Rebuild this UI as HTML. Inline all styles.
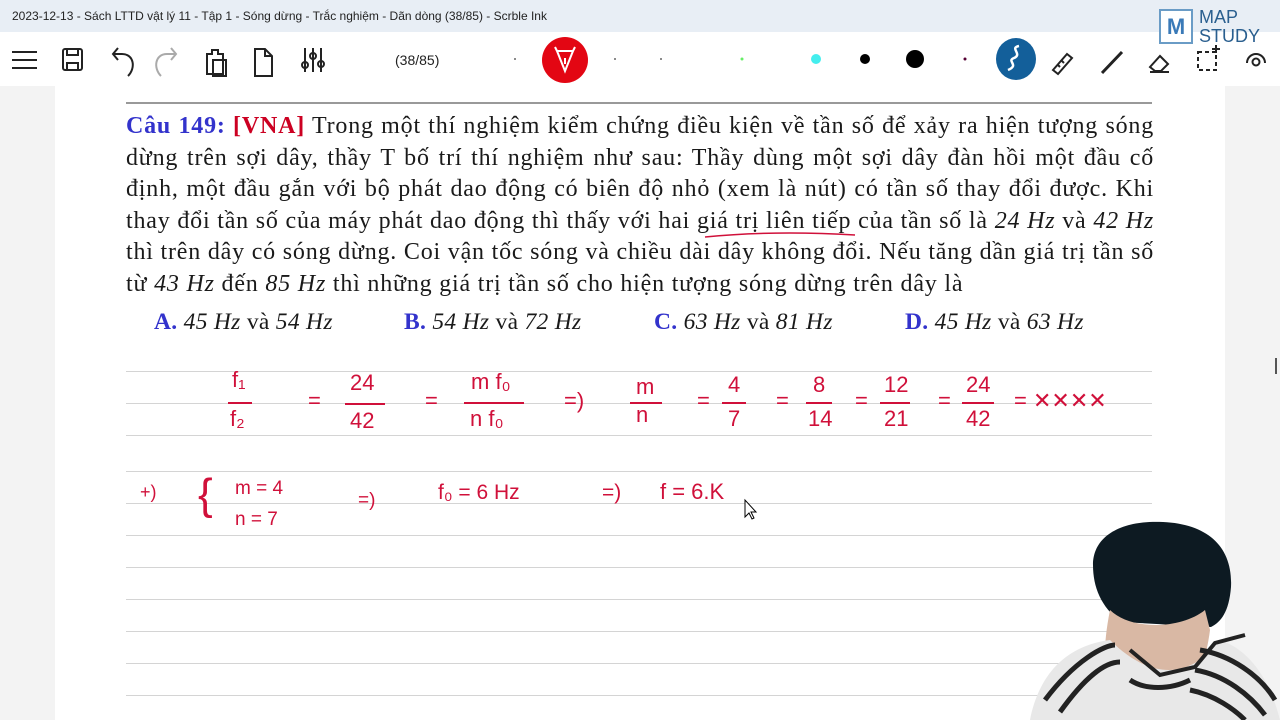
<!DOCTYPE html>
<html><head><meta charset="utf-8"><style>
*{margin:0;padding:0;box-sizing:border-box}
body{width:1280px;height:720px;overflow:hidden;background:#f3f3f3;font-family:"Liberation Sans",sans-serif;position:relative}
#title{position:absolute;left:0;top:0;width:1280px;height:32px;background:#e8eef5;font-size:12px;color:#222;padding:9px 0 0 12px}
#tb{position:absolute;left:0;top:32px;width:1280px;height:54px;background:#fff}
#page{position:absolute;left:55px;top:86px;width:1170px;height:634px;background:#fff}
.ln{position:absolute;left:126px;width:1026px;height:1px;background:#d4d4d4}
.txt{position:absolute;left:126px;width:1028px;font-family:"Liberation Serif",serif;font-size:24px;letter-spacing:0.8px;color:#1a1a1a}
.txt div{height:31.6px;line-height:31.6px;text-align:justify;text-align-last:justify;white-space:nowrap}
.b{color:#3333cc;font-weight:bold}.r{color:#cc0022;font-weight:bold}
i{font-style:italic}
.hw{position:absolute;color:#d0103a;font-family:"Liberation Sans",sans-serif;font-size:22px;white-space:nowrap}
.fr{position:absolute;height:1.6px;background:#d0103a}
</style></head><body>
<div id="title">2023-12-13 - Sách LTTD vật lý 11 - Tập 1 - Sóng dừng - Trắc nghiệm - Dãn dòng (38/85) - Scrble Ink</div>
<div id="tb">
<svg width="1280" height="54" style="position:absolute;left:0;top:0" fill="none" stroke="#222" stroke-width="2">
<path d="M12 20h25M12 28h25M12 36h25"/>
<rect x="63" y="17" width="19" height="21" rx="2"/><path d="M67 17v6h11v-6M67 38v-7h11v7"/>
<path d="M128 44c8-8 6-22-6-22h-8M118 16l-5 6 5 6"/>
<path stroke="#aaa" d="M161 44c-8-8-6-22 6-22h8M171 16l5 6-5 6"/>
<path d="M207 22h5v-4h6v4h5v20h-16zM213 28h13v16h-13z"/>
<path d="M255 17h10l7 7v20h-17zM265 17v7h7"/>
<path d="M305 16v24M313 16v24M321 16v24"/><circle cx="305" cy="33" r="3"/><circle cx="313" cy="24" r="3"/><circle cx="321" cy="32" r="3"/>
<circle cx="565" cy="28" r="23" fill="#e30613" stroke="none"/>
<path stroke="#fff" d="M557 19h16l-8 20zM565 26v6M557 19l-2-4M573 19l2-4"/>
<circle cx="515" cy="27" r="1" fill="#666" stroke="none"/><circle cx="615" cy="27" r="1" fill="#666" stroke="none"/>
<circle cx="661" cy="27" r="1" fill="#666" stroke="none"/><circle cx="742" cy="27" r="1.5" fill="#6e6" stroke="none"/>
<circle cx="816" cy="27" r="5" fill="#44eeee" stroke="none"/><circle cx="865" cy="27" r="5" fill="#000" stroke="none"/>
<circle cx="915" cy="27" r="9" fill="#000" stroke="none"/><circle cx="965" cy="27" r="1.5" fill="#503" stroke="none"/>
<ellipse cx="1016" cy="27" rx="20" ry="21" fill="#135f9a" stroke="none"/>
<path stroke="#fff" stroke-width="2.5" d="M1019 14c-10 2 4 8-5 12 -8 3 6 7-6 12"/>
<path d="M1053 38l14-16 5 4-14 16zM1058 33l2 2M1062 29l2 2"/>
<path stroke-width="3" d="M1102 41l20-21"/>
<path d="M1150 35l10-11 8 8-7 7h-6zM1150 40h19"/>
<path stroke-dasharray="4 3" d="M1198 20h18v18h-18z"/><path d="M1216 13v8M1212 17h8"/>
<path d="M1247 31a9 9 0 0 1 18 0"/><circle cx="1256" cy="30" r="3.5"/>
</svg>
<div style="position:absolute;left:395px;top:20px;font-size:14px;color:#222">(38/85)</div>
</div>
<div style="position:absolute;left:1159px;top:9px;width:34px;height:35px;border:2px solid #6a9cc6;background:#fff;color:#3a7ab8;font-size:22px;font-weight:bold;text-align:center;line-height:31px">M</div>
<div style="position:absolute;left:1199px;top:8px;font-size:18px;line-height:19px;color:#2a5f8f">MAP<br>STUDY</div>
<div id="page"></div>
<div style="position:absolute;left:126px;top:102px;width:1026px;height:2px;background:#999"></div>
<div class="txt" style="top:111px">
<div><span class="b">Câu 149: </span><span class="r">[VNA]</span> Trong một thí nghiệm kiểm chứng điều kiện về tần số để xảy ra hiện tượng sóng</div>
<div>dừng trên sợi dây, thầy T bố trí thí nghiệm như sau: Thầy dùng một sợi dây đàn hồi một đầu cố</div>
<div>định, một đầu gắn với bộ phát dao động có biên độ nhỏ (xem là nút) có tần số thay đổi được. Khi</div>
<div>thay đổi tần số của máy phát dao động thì thấy với hai giá trị liên tiếp của tần số là <i>24 Hz</i> và <i>42 Hz</i></div>
<div>thì trên dây có sóng dừng. Coi vận tốc sóng và chiều dài dây không đổi. Nếu tăng dần giá trị tần số</div>
<div style="text-align-last:left">từ <i>43 Hz</i> đến <i>85 Hz</i> thì những giá trị tần số cho hiện tượng sóng dừng trên dây là</div>
</div>
<div class="txt" style="top:307px;font-size:23.5px;letter-spacing:0.3px;line-height:31px">
<span style="position:absolute;left:28px"><span class="b">A.</span> <i>45 Hz</i> và <i>54 Hz</i></span>
<span style="position:absolute;left:278px"><span class="b">B.</span> <i>54 Hz</i> và <i>72 Hz</i></span>
<span style="position:absolute;left:528px"><span class="b">C.</span> <i>63 Hz</i> và <i>81 Hz</i></span>
<span style="position:absolute;left:779px"><span class="b">D.</span> <i>45 Hz</i> và <i>63 Hz</i></span>
</div>
<svg width="1280" height="720" style="position:absolute;left:0;top:0" fill="none" stroke="#d0103a" stroke-width="1.5"><path d="M705 237c50-5 100-5 150-2"/></svg>
<div class="ln" style="top:371px"></div><div class="ln" style="top:403px"></div><div class="ln" style="top:435px"></div>
<div class="ln" style="top:471px"></div><div class="ln" style="top:503px"></div><div class="ln" style="top:535px"></div>
<div class="ln" style="top:567px"></div><div class="ln" style="top:599px"></div><div class="ln" style="top:631px"></div>
<div class="ln" style="top:663px"></div><div class="ln" style="top:695px"></div>
<div class="hw" style="left:232px;top:367px">f₁</div><div class="fr" style="left:228px;top:402px;width:24px"></div><div class="hw" style="left:230px;top:406px">f₂</div>
<div class="hw" style="left:308px;top:388px">=</div>
<div class="hw" style="left:350px;top:370px">24</div><div class="fr" style="left:345px;top:403px;width:40px"></div><div class="hw" style="left:350px;top:408px">42</div>
<div class="hw" style="left:425px;top:388px">=</div>
<div class="hw" style="left:471px;top:369px">m f₀</div><div class="fr" style="left:464px;top:402px;width:60px"></div><div class="hw" style="left:470px;top:406px">n f₀</div>
<div class="hw" style="left:564px;top:388px">=)</div>
<div class="hw" style="left:636px;top:374px">m</div><div class="fr" style="left:630px;top:402px;width:32px"></div><div class="hw" style="left:636px;top:402px">n</div>
<div class="hw" style="left:697px;top:388px">=</div>
<div class="hw" style="left:728px;top:372px">4</div><div class="fr" style="left:722px;top:402px;width:24px"></div><div class="hw" style="left:728px;top:406px">7</div>
<div class="hw" style="left:776px;top:388px">=</div>
<div class="hw" style="left:813px;top:372px">8</div><div class="fr" style="left:806px;top:402px;width:26px"></div><div class="hw" style="left:808px;top:406px">14</div>
<div class="hw" style="left:855px;top:388px">=</div>
<div class="hw" style="left:884px;top:372px">12</div><div class="fr" style="left:880px;top:402px;width:30px"></div><div class="hw" style="left:884px;top:406px">21</div>
<div class="hw" style="left:938px;top:388px">=</div>
<div class="hw" style="left:966px;top:372px">24</div><div class="fr" style="left:962px;top:402px;width:32px"></div><div class="hw" style="left:966px;top:406px">42</div>
<div class="hw" style="left:1014px;top:388px">= ✕✕✕✕</div>
<div class="hw" style="left:140px;top:482px;font-size:18px">+)</div>
<div class="hw" style="left:198px;top:470px;font-size:44px;font-weight:100">{</div>
<div class="hw" style="left:235px;top:478px;font-size:19px">m = 4</div>
<div class="hw" style="left:235px;top:509px;font-size:19px">n = 7</div>
<div class="hw" style="left:358px;top:490px;font-size:19px">=)</div>
<div class="hw" style="left:438px;top:481px;font-size:21px">f₀ =  6 Hz</div>
<div class="hw" style="left:602px;top:481px;font-size:21px">=)</div>
<div class="hw" style="left:660px;top:479px;font-size:22px">f = 6.K</div>
<svg width="1280" height="720" style="position:absolute;left:0;top:0">
<path d="M745 500v17l4-4 3 6 2-1-3-6h5z" fill="#fff" stroke="#000" stroke-width="1"/>
<path d="M1093 565c0-30 30-45 70-43 45 2 70 25 68 65 -2 25-10 35-20 40l-90-5c-20-15-28-35-28-57z" fill="#0d1a22"/>
<path d="M1110 610c20 20 70 20 95 0l5 20c-5 40-20 70-40 90h-50c-15-30-20-60-10-110z" fill="#d9b8a4"/>
<path d="M1030 720c10-50 40-75 80-80 40 40 80 40 110 0 30 10 50 40 60 80z" fill="#e8e8e8"/>
<g stroke="#222" stroke-width="5" fill="none"><path d="M1045 700c30-40 60-55 70-55"/><path d="M1060 712c25-35 45-50 60-50"/><path d="M1200 650c30 5 60 25 75 50"/><path d="M1195 670c30 5 55 25 70 45"/><path d="M1190 690c25 5 45 20 55 30"/><path d="M1130 680c15 10 40 10 60 0"/></g>
<path d="M1130 650l30 25 35-8 20-24 30-8" stroke="#222" stroke-width="4" fill="none"/>
</svg>
<div style="position:absolute;left:1275px;top:358px;width:2px;height:16px;background:#555"></div>
</body></html>
